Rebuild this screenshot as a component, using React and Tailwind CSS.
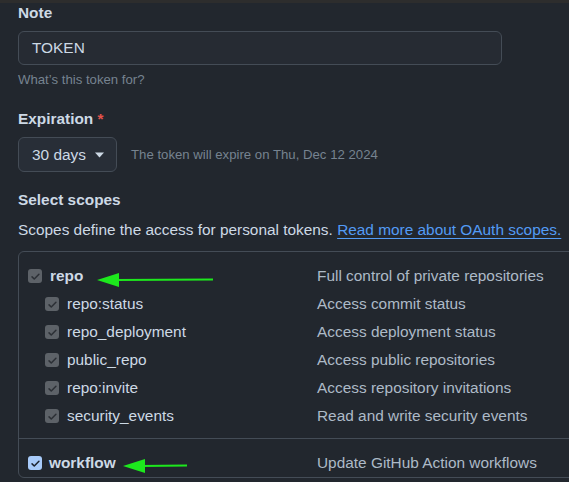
import React from "react";

const scopes = [
  { name: "repo:status", desc: "Access commit status" },
  { name: "repo_deployment", desc: "Access deployment status" },
  { name: "public_repo", desc: "Access public repositories" },
  { name: "repo:invite", desc: "Access repository invitations" },
  { name: "security_events", desc: "Read and write security events" },
];

function Check({ blue }) {
  return (
    <span
      className={
        "flex h-[14px] w-[14px] shrink-0 items-center justify-center rounded-[3px] " +
        (blue ? "bg-[#a8cbfa]" : "bg-[#5d6268]")
      }
    >
      <svg width="11" height="11" viewBox="0 0 16 16">
        <path
          d="M3 8.5l3.2 3.2L13 4.8"
          fill="none"
          stroke={blue ? "#1c2330" : "#2c3036"}
          strokeWidth="2.2"
          strokeLinecap="round"
          strokeLinejoin="round"
        />
      </svg>
    </span>
  );
}

function Arrow({ className, length }) {
  return (
    <svg className={className} width={length} height="16" viewBox={`0 0 ${length} 16`}>
      <polygon points="0,8 22,1 22,15" fill="#1de81d" />
      <line x1="18" y1="8" x2={length} y2="7.5" stroke="#1de81d" strokeWidth="2" />
    </svg>
  );
}

export default function App() {
  return (
    <div
      className="relative h-[482px] w-[569px] overflow-hidden bg-[#22272e] text-[#adbac7]"
      style={{ fontFamily: '"Liberation Sans", Arial, sans-serif' }}
    >
      <div className="h-[3px] bg-[#2d2d2d]" />

      <div className="pl-[18px]">
        <div className="text-[15.4px] font-bold leading-[20px] text-[#cdd9e5]">Note</div>
        <div className="mt-[8px] flex h-[34px] w-[484px] items-center rounded-[6px] border border-[#444c56] bg-[#262b33] px-[13px] text-[15.4px] text-[#cdd9e5]">
          TOKEN
        </div>
        <div className="mt-[6px] text-[13.2px] leading-[18px] text-[#768390]">What’s this token for?</div>

        <div className="mt-[20px] text-[15.4px] font-bold leading-[20px] text-[#cdd9e5]">
          Expiration <span className="text-[#e5534b]">*</span>
        </div>
        <div className="mt-[8px] flex items-center">
          <div className="flex h-[35px] w-[99px] items-center rounded-[6px] border border-[#444c56] bg-[#282e37] pl-[13px] text-[15.4px] text-[#cdd9e5]">
            30 days
            <svg className="ml-[9px]" width="9" height="6" viewBox="0 0 9 6">
              <polygon points="0,0.5 9,0.5 4.5,5.5" fill="#cdd9e5" />
            </svg>
          </div>
          <span className="ml-[14px] text-[13.2px] text-[#768390]">The token will expire on Thu, Dec 12 2024</span>
        </div>

        <div className="mt-[18px] text-[15.4px] font-bold leading-[20px] text-[#cdd9e5]">Select scopes</div>
        <div className="mt-[10px] text-[15.4px] leading-[20px] text-[#cdd9e5]">
          Scopes define the access for personal tokens.{" "}
          <span className="text-[#539bf5] underline underline-offset-[3px]">Read more about OAuth scopes.</span>
        </div>

        <div className="mt-[11px] w-[620px] rounded-[6px] border border-[#444c56]">
          <div className="pb-[8px] pt-[10px]">
            <div className="flex h-[28px] items-center pl-[9px]">
              <Check />
              <span className="ml-[8px] w-[267px] text-[15.4px] font-bold text-[#cdd9e5]">repo</span>
              <span className="text-[15.4px]">Full control of private repositories</span>
            </div>
            {scopes.map((s) => (
              <div key={s.name} className="flex h-[28px] items-center pl-[26px]">
                <Check />
                <span className="ml-[8px] w-[250px] text-[15.4px] text-[#cdd9e5]">{s.name}</span>
                <span className="text-[15.4px]">{s.desc}</span>
              </div>
            ))}
          </div>
          <div className="border-t border-[#444c56] pt-[10px]">
            <div className="flex h-[28px] items-center pl-[9px]">
              <Check blue />
              <span className="ml-[7px] w-[268px] text-[15.4px] font-bold text-[#cdd9e5]">workflow</span>
              <span className="text-[15.4px]">Update GitHub Action workflows</span>
            </div>
          </div>
        </div>
      </div>

      <Arrow className="absolute left-[97px] top-[272px]" length={116} />
      <Arrow className="absolute left-[123px] top-[458px]" length={64} />
    </div>
  );
}
